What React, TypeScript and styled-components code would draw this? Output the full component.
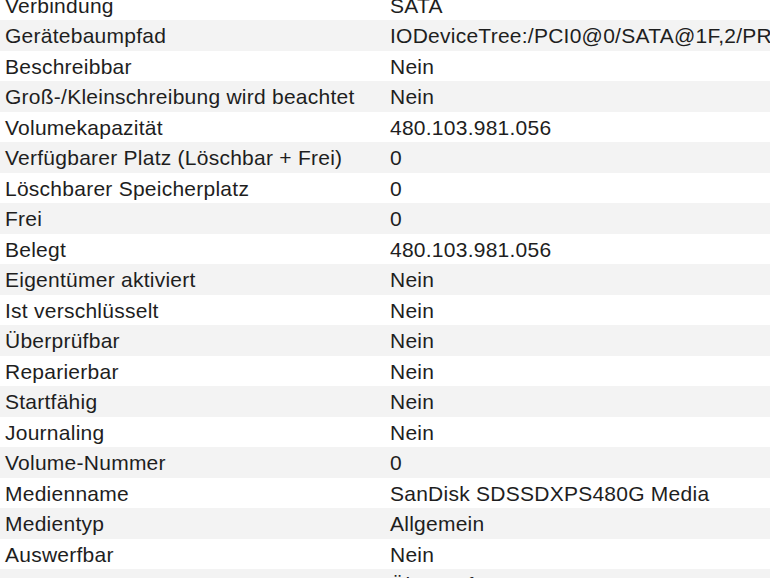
import styled, { createGlobalStyle } from "styled-components";

const GlobalStyle = createGlobalStyle`
    html, body {
        margin: 0;
        padding: 0;
        background: #ffffff;
        overflow: hidden;
    }
`;

const Viewport = styled.div`
    width: 770px;
    height: 578px;
    overflow: hidden;
    background: #ffffff;
    font-family: "Liberation Sans", Arial, sans-serif;
    font-size: 21px;
    letter-spacing: 0.25px;
    color: #1e1e1e;
`;

// the list is scrolled a bit, first row is cut at the top
const List = styled.div`
    display: flex;
    flex-direction: column;
    margin-top: -10.5px;
`;

const Row = styled.div<{ $striped: boolean }>`
    display: grid;
    grid-template-columns: 385px 1fr;
    height: 30.5px;
    align-items: center;
    background: ${(p) => (p.$striped ? "#f3f3f3" : "#ffffff")};
`;

const Label = styled.span`
    padding-left: 5px;
    padding-top: 2px;
    white-space: nowrap;
`;

const Value = styled.span`
    padding-left: 5px;
    padding-top: 2px;
    white-space: nowrap;
    overflow: hidden;
`;

const rows: [string, string][] = [
    ["Verbindung", "SATA"],
    ["Gerätebaumpfad", "IODeviceTree:/PCI0@0/SATA@1F,2/PRT1@1/PMP@0"],
    ["Beschreibbar", "Nein"],
    ["Groß-/Kleinschreibung wird beachtet", "Nein"],
    ["Volumekapazität", "480.103.981.056"],
    ["Verfügbarer Platz (Löschbar + Frei)", "0"],
    ["Löschbarer Speicherplatz", "0"],
    ["Frei", "0"],
    ["Belegt", "480.103.981.056"],
    ["Eigentümer aktiviert", "Nein"],
    ["Ist verschlüsselt", "Nein"],
    ["Überprüfbar", "Nein"],
    ["Reparierbar", "Nein"],
    ["Startfähig", "Nein"],
    ["Journaling", "Nein"],
    ["Volume-Nummer", "0"],
    ["Medienname", "SanDisk SDSSDXPS480G Media"],
    ["Medientyp", "Allgemein"],
    ["Auswerfbar", "Nein"],
    ["S.M.A.R.T.-Status", "Überprüft"],
];

export default function App() {
    return (
        <>
            <GlobalStyle />
            <Viewport>
                <List>
                    {rows.map(([label, value], i) => (
                        <Row key={label} $striped={i % 2 === 1}>
                            <Label>{label}</Label>
                            <Value>{value}</Value>
                        </Row>
                    ))}
                </List>
            </Viewport>
        </>
    );
}
